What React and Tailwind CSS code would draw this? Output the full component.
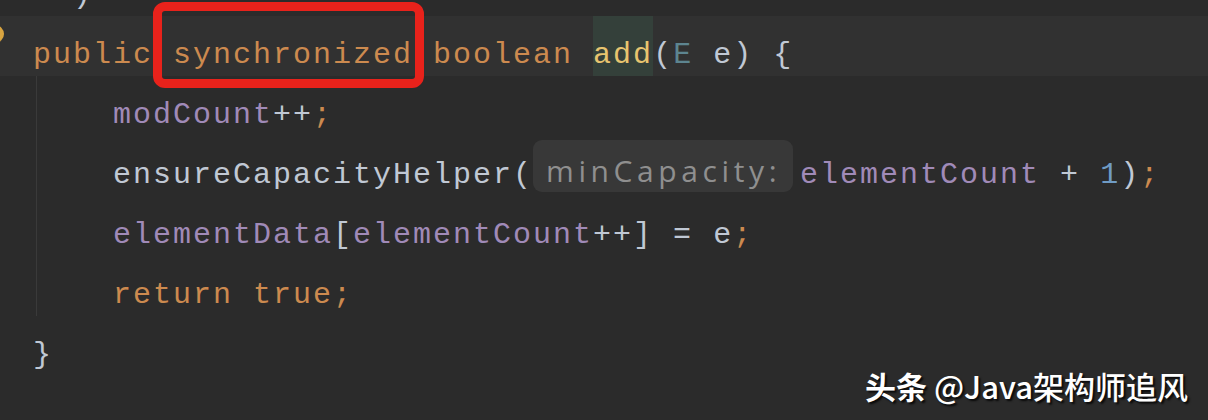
const kw = "text-[#cc8a4f]";
const fn = "text-[#e8c46f]";
const field = "text-[#a08ab8]";
const plain = "text-[#c0c8d4]";
const typ = "text-[#5d8590]";
const num = "text-[#6f9bc4]";

function Tok({ c, children, extra = "" }) {
  return <span className={`h-[60px] shrink-0 leading-[78px] whitespace-pre ${c} ${extra}`}>{children}</span>;
}

function Row({ children, band = false }) {
  return <div className={`flex h-[60px] ${band ? "bg-[#313131]" : ""}`}>{children}</div>;
}

export default function App() {
  return (
    <div className="relative w-[1208px] h-[420px] overflow-hidden bg-[#2b2b2b] font-['Liberation_Mono',monospace] text-[30px] tracking-[2px]">
      {/* tail of the previous line */}
      <div className="flex h-[16px] items-end overflow-hidden pl-[33px]">
        <Tok c={plain}>{"  )"}</Tok>
      </div>

      <Row band>
        <div className="relative flex pl-[33px]">
          <span className="absolute left-[-14px] top-[9px] h-[18px] w-[18px] rounded-full bg-[#d8a440]" />
          <Tok c={kw}>{"public "}</Tok>
          <Tok c={kw}>{"synchronized "}</Tok>
          <Tok c={kw}>{"boolean "}</Tok>
          <Tok c={fn} extra="bg-[#34403a]">add</Tok>
          <Tok c={plain}>(</Tok>
          <Tok c={typ}>E</Tok>
          <Tok c={plain}>{" e) {"}</Tok>
        </div>
      </Row>

      <div className="ml-[36px] border-l border-[#3a3a3a] pl-[76px]">
        <Row>
          <Tok c={field}>modCount</Tok>
          <Tok c={plain}>++</Tok>
          <Tok c={kw}>;</Tok>
        </Row>
        <Row>
          <div className="flex items-center">
            <Tok c={plain}>ensureCapacityHelper(</Tok>
            <div className="flex h-[52px] w-[260px] shrink-0 items-center rounded-[9px] bg-[#383838] pl-[13px] pt-[8px] font-['Open_Sans',sans-serif] text-[30px] tracking-[4.6px] text-[#8f8f8f]">
              minCapacity:
            </div>
            <Tok c={field} extra="ml-[7px]">elementCount</Tok>
            <Tok c={plain}>{" + "}</Tok>
            <Tok c={num}>1</Tok>
            <Tok c={plain}>)</Tok>
            <Tok c={kw}>;</Tok>
          </div>
        </Row>
        <Row>
          <Tok c={field}>elementData</Tok>
          <Tok c={plain}>[</Tok>
          <Tok c={field}>elementCount</Tok>
          <Tok c={plain}>{"++] = e"}</Tok>
          <Tok c={kw}>;</Tok>
        </Row>
        <Row>
          <Tok c={kw}>{"return true;"}</Tok>
        </Row>
      </div>

      <Row>
        <div className="flex pl-[33px]">
          <Tok c={plain}>{"}"}</Tok>
        </div>
      </Row>

      {/* annotation box */}
      <div className="absolute left-[153px] top-[2px] h-[86px] w-[271px] rounded-[12px] border-[9px] border-[#e8221b]" />

      {/* watermark */}
      <div className="absolute right-[20px] top-[365px] font-['Noto_Sans_CJK_SC',sans-serif] text-[31px] leading-[42px] tracking-normal text-white [text-shadow:2px_2px_2px_rgba(0,0,0,0.8)]">
        <span className="font-bold">头条</span>
        <span className="font-medium"> @Java架构师追风</span>
      </div>
    </div>
  );
}
